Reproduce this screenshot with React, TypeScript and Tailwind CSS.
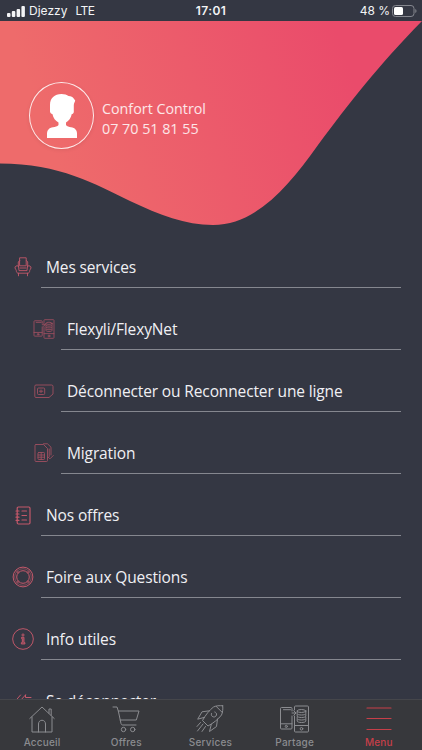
import type { ReactNode } from "react"

function ArmchairIcon() {
  return (
    <svg width="18" height="20" viewBox="0 0 18 20" fill="none" stroke="currentColor" strokeWidth="0.9" strokeLinejoin="round" strokeLinecap="round">
      <path d="M6 .8h6.200v8H6z" />
      <path d="M5.800 3.500 4.300 5v4M12.400 3.500 13.700 5v4" />
      <path d="M4.500 9.200C2.500 8 .8 9.300 1 11c.2 1.300 1.200 1.300 1.300 2.500 0 1.600.7 2.700 2 2.700h9.400c1.300 0 2-1.100 2-2.700.1-1.200 1.100-1.200 1.300-2.500.2-1.700-1.500-3-3.500-1.800" />
      <path d="M4.500 9.200 5 13.600h8l.5-4.400M4.500 16.200v2.600M13.500 16.200v2.600M6 11h6" />
    </svg>
  )
}

function PhonesIcon({ width, height, stroke }: { width: number; height: number; stroke: number }) {
  return (
    <svg width={width} height={height} viewBox="0 0 30 28" fill="none" stroke="currentColor" strokeWidth={stroke} strokeLinejoin="round" strokeLinecap="round">
      <path d="M12.500 6V3.500a1 1 0 0 0-1-1h-9.500a1 1 0 0 0-1 1v19.500a1 1 0 0 0 1 1h9.500a1 1 0 0 0 1-1V11" />
      <path d="M1 18.800h11.500M4 4.700h7" />
      <circle cx="6.800" cy="21.400" r="1.100" />
      <path d="M15 5V2a1 1 0 0 1 1-1h12a1 1 0 0 1 1 1v24a1 1 0 0 1-1 1H16a1 1 0 0 1-1-1V11" />
      <path d="M15 20.500h14M12.500 8h4M14.300 5.800l2.200 2.200-2.200 2.200" />
      <circle cx="22" cy="23.800" r="1.300" />
      <ellipse cx="22" cy="6" rx="4.300" ry="1.500" />
      <path d="M17.700 6v2.500c0 2 8.600 2 8.600 0V6M17.700 9.500v1.500c0 2 8.600 2 8.600 0V9.500M17.700 12v1.500c0 2 8.600 2 8.600 0V12M17.700 14.500V16c0 2 8.600 2 8.600 0v-1.500" />
    </svg>
  )
}

function SimIcon() {
  return (
    <svg width="20" height="15" viewBox="0 0 20 15" fill="none" stroke="currentColor" strokeWidth="0.9" strokeLinejoin="round">
      <path d="M2 1h15.500a1.500 1.500 0 0 1 1.500 1.500v7.500l-4 3.500H2A1.200 1.200 0 0 1 .8 12.300V2.200A1.200 1.200 0 0 1 2 1z" />
      <rect x="3.500" y="4" width="7.200" height="6.500" rx="1" />
      <path d="M5 7.200h4.200M7 5.500v3.500" />
    </svg>
  )
}

function SimSwapIcon() {
  return (
    <svg width="20" height="20" viewBox="0 0 20 20" fill="none" stroke="currentColor" strokeWidth="0.9" strokeLinejoin="round" strokeLinecap="round">
      <path d="M2 1.500h7.500l4 4V17.500a1 1 0 0 1-1 1H2a1 1 0 0 1-1-1v-15a1 1 0 0 1 1-1z" />
      <rect x="4" y="9.500" width="6.500" height="7" rx=".8" />
      <path d="M4 12h6.500M4 14.200h6.500M7.200 9.500v7" />
      <path d="M9.500.8h4L17 4.200V12M15.200 6v7.500M14 14l2 1.800 3.300-3.300" />
    </svg>
  )
}

function NotebookIcon() {
  return (
    <svg width="16" height="19" viewBox="0 0 16 19" fill="none" stroke="currentColor" strokeWidth="1.200" strokeLinecap="round">
      <rect x="2.200" y="1" width="12.800" height="17" rx="1.200" />
      <path d="M1 5h3M1 8h3M1 11.200h3M1 14.300h3M7 5h4.500M7 9.500h4.500M7 14h4.500" />
    </svg>
  )
}

function LifebuoyIcon() {
  return (
    <svg width="22" height="22" viewBox="0 0 22 22" fill="none" stroke="currentColor" strokeWidth="1">
      <circle cx="11" cy="11" r="9.900" />
      <circle cx="11" cy="11" r="8.300" strokeWidth=".5" />
      <circle cx="11" cy="11" r="6.300" />
      <path d="M5 4.500l2 2M4.300 5.500l2 2M17 4.500l-2 2M17.700 5.500l-2 2M5 17.500l2-2M4.300 16.500l2-2M17 17.500l-2-2M17.700 16.500l-2-2" strokeWidth=".8" />
    </svg>
  )
}

function InfoIcon() {
  return (
    <svg width="22" height="22" viewBox="0 0 23 23" fill="none" stroke="currentColor" strokeWidth="1">
      <circle cx="11.500" cy="11.500" r="10.800" />
      <circle cx="11.500" cy="7.300" r="1.100" />
      <path d="M10 9.700h2.500v5.600h1v1.400H9.800v-1.400h1v-4.200H10z" fill="currentColor" fillOpacity=".5" />
    </svg>
  )
}

function LogoutIcon() {
  return (
    <svg width="18" height="15" viewBox="0 0 18 15" fill="none" stroke="currentColor" strokeWidth="1" strokeLinejoin="round" strokeLinecap="round">
      <path d="M6.500 1 1 7.500 6.500 14M11.500 1 5.500 7.500 11.500 14M11.500 1v2.500H17" />
    </svg>
  )
}

function HomeIcon() {
  return (
    <svg width="26" height="27" viewBox="0 0 26 27" fill="none" stroke="currentColor" strokeWidth="1" strokeLinejoin="round" strokeLinecap="round">
      <path d="M.8 12.500 13 1l12.200 11.500M3 11v15h20V11M9.500 26v-8c0-5 7-5 7 0v8M20 7.200V3h2.200v6.300" />
    </svg>
  )
}

function CartIcon() {
  return (
    <svg width="28" height="27" viewBox="0 0 28 27" fill="none" stroke="currentColor" strokeWidth="1" strokeLinejoin="round" strokeLinecap="round">
      <path d="M1 1h4l1.300 4L9 17.500c.3 1 .8 1.500 2 1.500h13M6.300 5H27l-2.700 9H8.200" />
      <circle cx="11.500" cy="23.500" r="2.200" />
      <circle cx="20.700" cy="23.500" r="2.200" />
    </svg>
  )
}

function RocketIcon() {
  return (
    <svg width="28" height="28" viewBox="0 0 28 28" fill="none" stroke="currentColor" strokeWidth="1" strokeLinejoin="round" strokeLinecap="round">
      <path d="M26.700.8C23.500.4 20 .7 17.500 2 13.500 5 9.500 10 6.500 15.500l5.500 5.500C17.500 18 22.500 14 25.500 10c1.200-2.500 1.600-6 1.200-9.200z" />
      <path d="M20 1.200 26.300 7.500M13.500 5.800 6 6.800 1.700 14.200 8.500 12.300M21.500 14 20.500 21.500 13.500 26.500 15.300 19.300" />
      <path d="M15.500 8.500c-1.500 3.500 4 5 5 1.500.3-1.500-.5-2.700-1.700-3" />
      <path d="M4.500 17.500 1 21.500M7 19 1.500 26M9.500 21.500 6 26.500" />
    </svg>
  )
}

function MenuIcon() {
  return (
    <svg width="26" height="26" viewBox="0 0 26 26" stroke="currentColor" strokeWidth="1.200" strokeLinecap="round">
      <path d="M1 2h24M1 12.500h24M1 23.500h24" />
    </svg>
  )
}

const items = [
  { label: "Mes services", icon: <ArmchairIcon /> },
  { label: "Flexyli/FlexyNet", icon: <PhonesIcon width={22} height={20} stroke={1.2} />, sub: true },
  { label: "Déconnecter ou Reconnecter une ligne", icon: <SimIcon />, sub: true },
  { label: "Migration", icon: <SimSwapIcon />, sub: true },
  { label: "Nos offres", icon: <NotebookIcon /> },
  { label: "Foire aux Questions", icon: <LifebuoyIcon /> },
  { label: "Info utiles", icon: <InfoIcon /> },
  { label: "Se déconnecter", icon: <LogoutIcon /> },
]

const tabs = [
  { label: "Accueil", icon: <HomeIcon /> },
  { label: "Offres", icon: <CartIcon /> },
  { label: "Services", icon: <RocketIcon /> },
  { label: "Partage", icon: <PhonesIcon width={31} height={28} stroke={1} /> },
  { label: "Menu", icon: <MenuIcon />, active: true },
]

function StatusBar() {
  return (
    <div className="grid h-[21px] shrink-0 grid-cols-3 items-center px-[7px] pt-px font-['Inter',sans-serif] text-[12px] text-gray-100">
      <div className="flex items-center">
        <svg width="18" height="11" viewBox="0 0 18 11" fill="currentColor">
          <rect x="0" y="7" width="3.500" height="4" rx="1" />
          <rect x="4.800" y="5" width="3.500" height="6" rx="1" />
          <rect x="9.600" y="3" width="3.500" height="8" rx="1" />
          <rect x="14.400" y="0" width="3.500" height="11" rx="1" />
        </svg>
        <span className="ml-[4px]">Djezzy</span>
        <span className="ml-[8px] tracking-[-0.5px]">LTE</span>
      </div>
      <div className="text-center font-semibold tracking-[0.4px]">17:01</div>
      <div className="-mr-[2px] flex items-center justify-end">
        <span>48 %</span>
        <svg className="ml-[2px]" width="25" height="12" viewBox="0 0 25 12" fill="none">
          <rect x=".5" y=".5" width="21.500" height="11" rx="3" stroke="#85878f" />
          <rect x="2" y="2" width="9" height="8" rx="1.500" fill="#fff" />
          <path d="M23.300 4v4c1.600-.6 1.600-3.400 0-4z" fill="#85878f" />
        </svg>
      </div>
    </div>
  )
}

function Header() {
  return (
    <header className="relative h-[205px] shrink-0">
      <svg className="absolute inset-0" width="422" height="205" viewBox="0 21 422 205">
        <defs>
          <linearGradient id="wave" gradientUnits="userSpaceOnUse" x1="50" y1="140" x2="340" y2="40">
            <stop offset="0" stopColor="#ee6b6b" />
            <stop offset="1" stopColor="#ea4b6b" />
          </linearGradient>
        </defs>
        <path d="M0 21H422C378 66 350 102 318 145C288 187 256 225 213 225C185 225 160 215 130 201C95 184 60 163.500 0 163.500Z" fill="url(#wave)" />
      </svg>
      <div className="relative flex items-center pt-[61px] pl-[29px]">
        <div className="flex h-[67px] w-[65px] items-center justify-center rounded-[50%] border border-white/85 shadow-[0_1px_4px_rgba(0,0,0,0.08)]">
          <svg width="30" height="44" viewBox="0 0 30 44" fill="#fff">
            <path d="M3 11C3 4 7.500 0 14.500 0c3 0 5.500.8 7 2 2.500.2 4.500 1 5 2.200l1.700 2.300c-.2 1.500-1.200 2.200-1.400 4.500v7c-.3 1.500-1 2-2 2-.8 4-3 7-5.800 8.500v2.500c1 1.500 3 2 5 2.200 4 .5 6 3 6 6.500V44H0v-4.300c0-3.500 2-6 6-6.500 2-.2 4.500-.7 5.500-2.200v-2.500C8.500 27 6.200 24 5.400 20 4 20 3.300 19 3 17.500z" />
          </svg>
        </div>
        <div className="pt-[7px] pl-[8px] font-['Open_Sans',sans-serif] text-[14.300px] leading-[20px] text-white/85">
          <p>Confort Control</p>
          <p>07 70 51 81 55</p>
        </div>
      </div>
    </header>
  )
}

function MenuRow({ label, icon, sub }: { label: string; icon: ReactNode; sub?: boolean }) {
  return (
    <li className={`flex h-[62px] shrink-0 pr-[21px] ${sub ? "pl-[25px]" : "pl-[5px]"}`}>
      <div className={`flex w-9 shrink-0 items-center justify-center pt-5 text-[#c4586a] ${sub ? "pl-px opacity-75" : ""}`}>{icon}</div>
      <div className={`flex flex-1 items-center border-b border-[#85878f] pt-[23px] whitespace-nowrap ${sub ? "pl-[6px]" : "pl-[5px]"}`}>{label}</div>
    </li>
  )
}

export default function App() {
  return (
    <div className="flex h-[750px] w-[422px] flex-col overflow-hidden bg-[#343743]">
      <StatusBar />
      <Header />
      <ul className="min-h-0 flex-1 overflow-hidden font-['Open_Sans',sans-serif] text-[15.5px] tracking-[-0.13px] text-[#f0f0f4]">
        {items.map((item) => (
          <MenuRow key={item.label} {...item} />
        ))}
      </ul>
      <nav className="grid h-[51px] shrink-0 grid-cols-5 border-t border-[#45464b] bg-[#37383c] pr-px font-['Inter',sans-serif] text-[10px] font-medium">
        {tabs.map((tab) => (
          <div key={tab.label} className={`flex flex-col items-center pt-[4px] ${tab.active ? "text-[#c73f49]" : "text-[#8b8c90]"}`}>
            <div className="flex h-[30px] items-center">{tab.icon}</div>
            <span className="leading-[16px] tracking-[0.2px]">{tab.label}</span>
          </div>
        ))}
      </nav>
    </div>
  )
}
